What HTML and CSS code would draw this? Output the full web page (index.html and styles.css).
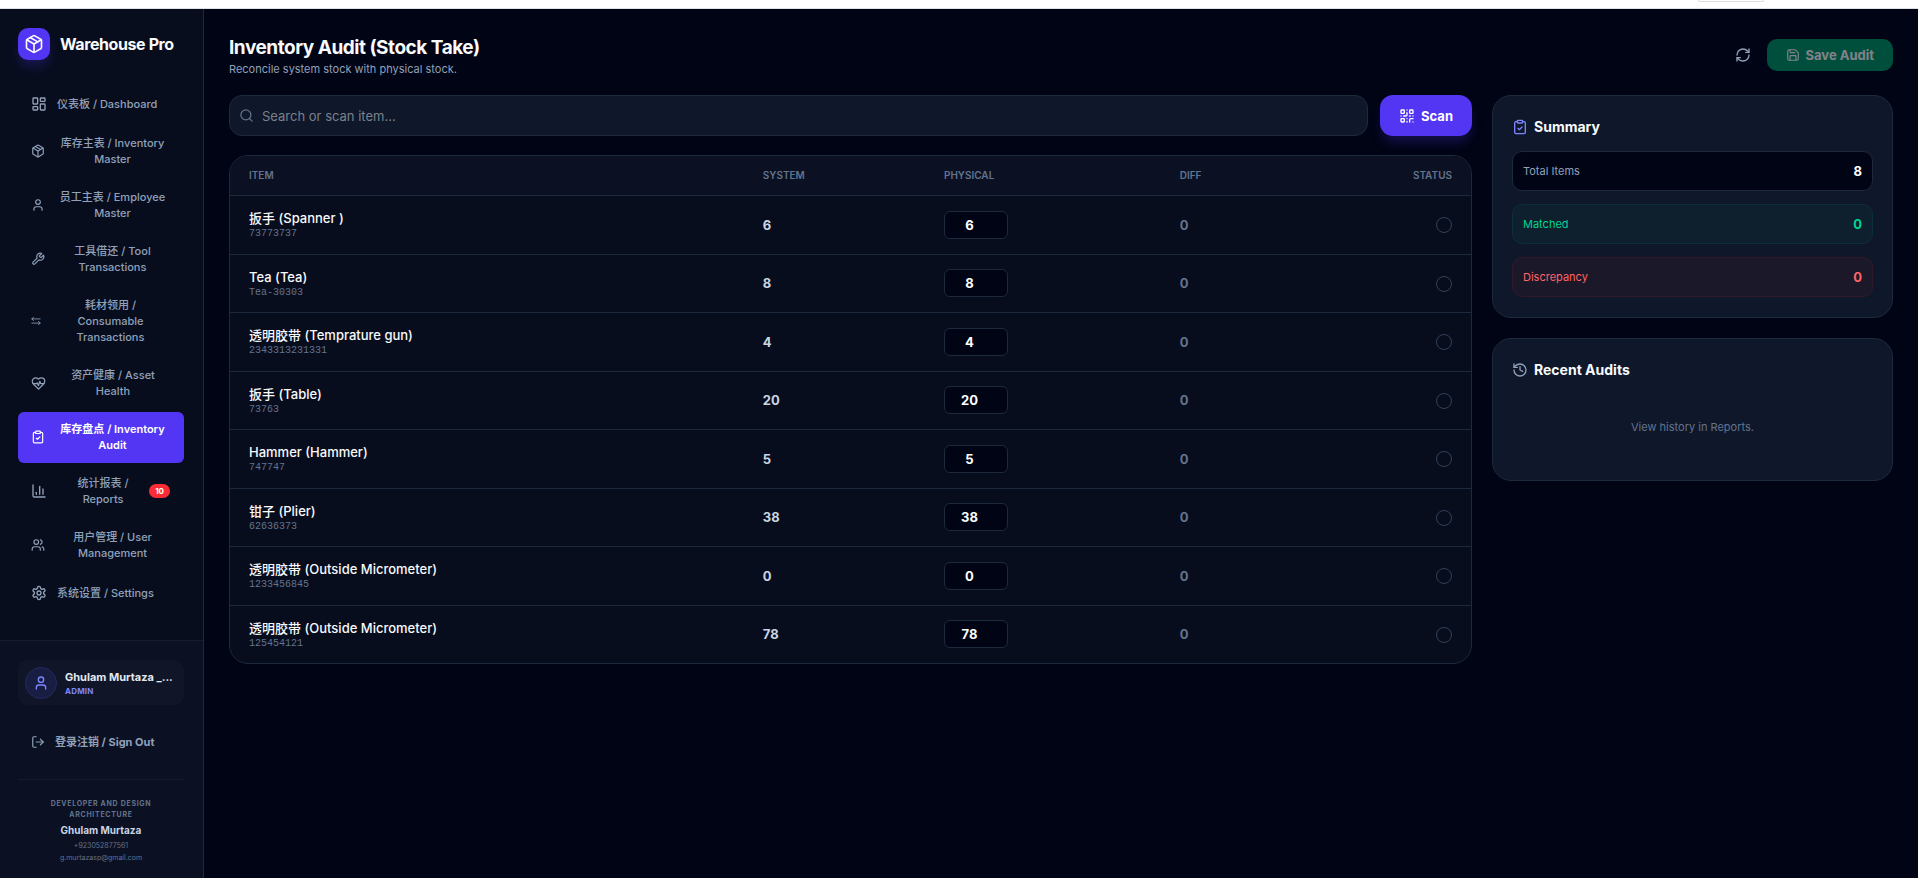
FILE: index.html
```html
<!DOCTYPE html>
<html lang="en">
<head>
  <meta charset="UTF-8">
  <meta name="viewport" content="width=device-width, initial-scale=1.0">
  <title>Warehouse Pro</title>
  <link rel="stylesheet" href="styles.css">
</head>
<body>
  <!-- Icon set -->
  <svg class="sprite" xmlns="http://www.w3.org/2000/svg">
    <symbol id="i-box" viewBox="0 0 24 24"><path d="m7.5 4.27 9 5.15"/><path d="M21 8a2 2 0 0 0-1-1.73l-7-4a2 2 0 0 0-2 0l-7 4A2 2 0 0 0 3 8v8a2 2 0 0 0 1 1.73l7 4a2 2 0 0 0 2 0l7-4A2 2 0 0 0 21 16Z"/><path d="m3.3 7 8.7 5 8.7-5"/><path d="M12 22V12"/></symbol>
    <symbol id="i-dashboard" viewBox="0 0 24 24"><rect width="7" height="9" x="3" y="3" rx="1"/><rect width="7" height="5" x="14" y="3" rx="1"/><rect width="7" height="9" x="14" y="12" rx="1"/><rect width="7" height="5" x="3" y="16" rx="1"/></symbol>
    <symbol id="i-user" viewBox="0 0 24 24"><path d="M19 21v-2a4 4 0 0 0-4-4H9a4 4 0 0 0-4 4v2"/><circle cx="12" cy="7" r="4"/></symbol>
    <symbol id="i-wrench" viewBox="0 0 24 24"><path d="M14.7 6.3a1 1 0 0 0 0 1.4l1.6 1.6a1 1 0 0 0 1.4 0l3.77-3.77a6 6 0 0 1-7.94 7.94l-6.91 6.91a2.12 2.12 0 0 1-3-3l6.91-6.91a6 6 0 0 1 7.94-7.94l-3.76 3.76z"/></symbol>
    <symbol id="i-swap" viewBox="0 0 24 24"><path d="m6 3-4 4 4 4"/><path d="M2 7h20"/><path d="m18 13 4 4-4 4"/><path d="M22 17H2"/></symbol>
    <symbol id="i-heart" viewBox="0 0 24 24"><path d="M19 14c1.49-1.46 3-3.21 3-5.5A5.5 5.5 0 0 0 16.5 3c-1.76 0-3 .5-4.5 2-1.5-1.5-2.74-2-4.5-2A5.5 5.5 0 0 0 2 8.5c0 2.3 1.5 4.05 3 5.5l7 7Z"/><path d="M3.22 12H9.5l.5-1 2 4.5 2-7 1.5 3.5h5.27"/></symbol>
    <symbol id="i-clipboard" viewBox="0 0 24 24"><rect width="8" height="4" x="8" y="2" rx="1" ry="1"/><path d="M16 4h2a2 2 0 0 1 2 2v14a2 2 0 0 1-2 2H6a2 2 0 0 1-2-2V6a2 2 0 0 1 2-2h2"/><path d="m9 14 2 2 4-4"/></symbol>
    <symbol id="i-chart" viewBox="0 0 24 24"><path d="M3 3v16a2 2 0 0 0 2 2h16"/><path d="M18 17V9"/><path d="M13 17V5"/><path d="M8 17v-3"/></symbol>
    <symbol id="i-users" viewBox="0 0 24 24"><path d="M16 21v-2a4 4 0 0 0-4-4H6a4 4 0 0 0-4 4v2"/><circle cx="9" cy="7" r="4"/><path d="M22 21v-2a4 4 0 0 0-3-3.87"/><path d="M16 3.13a4 4 0 0 1 0 7.75"/></symbol>
    <symbol id="i-settings" viewBox="0 0 24 24"><path d="M12.22 2h-.44a2 2 0 0 0-2 2v.18a2 2 0 0 1-1 1.73l-.43.25a2 2 0 0 1-2 0l-.15-.08a2 2 0 0 0-2.73.73l-.22.38a2 2 0 0 0 .73 2.73l.15.1a2 2 0 0 1 1 1.72v.51a2 2 0 0 1-1 1.74l-.15.09a2 2 0 0 0-.73 2.73l.22.38a2 2 0 0 0 2.73.73l.15-.08a2 2 0 0 1 2 0l.43.25a2 2 0 0 1 1 1.73V20a2 2 0 0 0 2 2h.44a2 2 0 0 0 2-2v-.18a2 2 0 0 1 1-1.73l.43-.25a2 2 0 0 1 2 0l.15.08a2 2 0 0 0 2.73-.73l.22-.39a2 2 0 0 0-.73-2.73l-.15-.08a2 2 0 0 1-1-1.74v-.5a2 2 0 0 1 1-1.74l.15-.09a2 2 0 0 0 .73-2.73l-.22-.38a2 2 0 0 0-2.73-.73l-.15.08a2 2 0 0 1-2 0l-.43-.25a2 2 0 0 1-1-1.73V4a2 2 0 0 0-2-2z"/><circle cx="12" cy="12" r="3"/></symbol>
    <symbol id="i-logout" viewBox="0 0 24 24"><path d="m16 17 5-5-5-5"/><path d="M21 12H9"/><path d="M9 21H5a2 2 0 0 1-2-2V5a2 2 0 0 1 2-2h4"/></symbol>
    <symbol id="i-refresh" viewBox="0 0 24 24"><path d="M3 12a9 9 0 0 1 9-9 9.75 9.75 0 0 1 6.74 2.74L21 8"/><path d="M21 3v5h-5"/><path d="M21 12a9 9 0 0 1-9 9 9.75 9.75 0 0 1-6.74-2.74L3 16"/><path d="M8 16H3v5"/></symbol>
    <symbol id="i-save" viewBox="0 0 24 24"><path d="M15.2 3a2 2 0 0 1 1.4.6l3.8 3.8a2 2 0 0 1 .6 1.4V19a2 2 0 0 1-2 2H5a2 2 0 0 1-2-2V5a2 2 0 0 1 2-2z"/><path d="M17 21v-7a1 1 0 0 0-1-1H8a1 1 0 0 0-1 1v7"/><path d="M7 3v4a1 1 0 0 0 1 1h7"/></symbol>
    <symbol id="i-search" viewBox="0 0 24 24"><circle cx="11" cy="11" r="8"/><path d="m21 21-4.3-4.3"/></symbol>
    <symbol id="i-qr" viewBox="0 0 24 24"><rect width="5" height="5" x="3" y="3" rx="1"/><rect width="5" height="5" x="16" y="3" rx="1"/><rect width="5" height="5" x="3" y="16" rx="1"/><path d="M21 16h-3a2 2 0 0 0-2 2v3"/><path d="M21 21v.01"/><path d="M12 7v3a2 2 0 0 1-2 2H7"/><path d="M3 12h.01"/><path d="M12 3h.01"/><path d="M12 16v.01"/><path d="M16 12h1"/><path d="M21 12v.01"/><path d="M12 21v-1"/></symbol>
    <symbol id="i-history" viewBox="0 0 24 24"><path d="M3 12a9 9 0 1 0 9-9 9.75 9.75 0 0 0-6.74 2.74L3 8"/><path d="M3 3v5h5"/><path d="M12 7v5l4 2"/></symbol>
  </svg>

  <div class="top-strip"><div class="top-tab"></div></div>

  <div class="app">
    <aside class="sidebar">
      <div class="brand">
        <span class="brand-logo"><svg class="icon icon-lg"><use href="#i-box"/></svg></span>
        <span class="brand-name">Warehouse Pro</span>
      </div>

      <nav class="nav">
        <button class="nav-item" type="button"><svg class="icon"><use href="#i-dashboard"/></svg><span>仪表板 / Dashboard</span></button>
        <button class="nav-item wrap" type="button"><svg class="icon icon-sm"><use href="#i-box"/></svg><span>库存主表 / Inventory Master</span></button>
        <button class="nav-item wrap" type="button"><svg class="icon icon-sm"><use href="#i-user"/></svg><span>员工主表 / Employee Master</span></button>
        <button class="nav-item wrap" type="button"><svg class="icon icon-sm"><use href="#i-wrench"/></svg><span>工具借还 / Tool Transactions</span></button>
        <button class="nav-item wrap" type="button"><svg class="icon icon-xs"><use href="#i-swap"/></svg><span>耗材领用 / Consumable Transactions</span></button>
        <button class="nav-item wrap" type="button"><svg class="icon icon-md"><use href="#i-heart"/></svg><span>资产健康 / Asset Health</span></button>
        <button class="nav-item wrap active" type="button"><svg class="icon icon-sm"><use href="#i-clipboard"/></svg><span>库存盘点 / Inventory Audit</span></button>
        <button class="nav-item wrap" type="button"><svg class="icon"><use href="#i-chart"/></svg><span>统计报表 / Reports</span><span class="badge">10</span></button>
        <button class="nav-item wrap" type="button"><svg class="icon icon-sm"><use href="#i-users"/></svg><span>用户管理 / User Management</span></button>
        <button class="nav-item" type="button"><svg class="icon"><use href="#i-settings"/></svg><span>系统设置 / Settings</span></button>
      </nav>

      <div class="sidebar-footer">
        <div class="user-card">
          <span class="avatar"><svg class="icon"><use href="#i-user"/></svg></span>
          <div>
            <div class="user-name">Ghulam Murtaza _...</div>
            <div class="user-role">ADMIN</div>
          </div>
        </div>
        <button class="sign-out" type="button"><svg class="icon icon-sm"><use href="#i-logout"/></svg><span>登录注销 / Sign Out</span></button>
        <div class="credits">
          <div class="credits-label">Developer and Design Architecture</div>
          <div class="credits-name">Ghulam Murtaza</div>
          <div class="credits-line">+923052877561</div>
          <div class="credits-line">g.murtazasp@gmail.com</div>
        </div>
      </div>
    </aside>

    <main class="main">
      <header class="page-header">
        <div>
          <h1>Inventory Audit (Stock Take)</h1>
          <p>Reconcile system stock with physical stock.</p>
        </div>
        <div class="actions">
          <button class="btn-refresh" type="button" aria-label="Refresh"><svg class="icon"><use href="#i-refresh"/></svg></button>
          <button class="btn-save" type="button" disabled><svg class="icon icon-sm"><use href="#i-save"/></svg>Save Audit</button>
        </div>
      </header>

      <div class="content">
        <section class="audit">
          <div class="toolbar">
            <label class="search">
              <svg class="icon icon-md"><use href="#i-search"/></svg>
              <input type="text" placeholder="Search or scan item..." aria-label="Search or scan item">
            </label>
            <button class="btn-scan" type="button"><svg class="icon"><use href="#i-qr"/></svg>Scan</button>
          </div>

          <div class="table-card">
            <table>
              <thead>
                <tr>
                  <th class="col-item">ITEM</th>
                  <th class="col-system">SYSTEM</th>
                  <th class="col-physical">PHYSICAL</th>
                  <th>DIFF</th>
                  <th class="col-status">STATUS</th>
                </tr>
              </thead>
              <tbody>
                <tr>
                  <td><div class="item-name">扳手 (Spanner )</div><div class="item-code">73773737</div></td>
                  <td class="system">6</td>
                  <td><input class="count" type="number" value="6" aria-label="Physical count, Spanner"></td>
                  <td class="diff">0</td>
                  <td class="col-status"><span class="status"></span></td>
                </tr>
                <tr>
                  <td><div class="item-name">Tea (Tea)</div><div class="item-code">Tea-30303</div></td>
                  <td class="system">8</td>
                  <td><input class="count" type="number" value="8" aria-label="Physical count, Tea"></td>
                  <td class="diff">0</td>
                  <td class="col-status"><span class="status"></span></td>
                </tr>
                <tr>
                  <td><div class="item-name">透明胶带 (Temprature gun)</div><div class="item-code">2343313231331</div></td>
                  <td class="system">4</td>
                  <td><input class="count" type="number" value="4" aria-label="Physical count, Temprature gun"></td>
                  <td class="diff">0</td>
                  <td class="col-status"><span class="status"></span></td>
                </tr>
                <tr>
                  <td><div class="item-name">扳手 (Table)</div><div class="item-code">73763</div></td>
                  <td class="system">20</td>
                  <td><input class="count" type="number" value="20" aria-label="Physical count, Table"></td>
                  <td class="diff">0</td>
                  <td class="col-status"><span class="status"></span></td>
                </tr>
                <tr>
                  <td><div class="item-name">Hammer (Hammer)</div><div class="item-code">747747</div></td>
                  <td class="system">5</td>
                  <td><input class="count" type="number" value="5" aria-label="Physical count, Hammer"></td>
                  <td class="diff">0</td>
                  <td class="col-status"><span class="status"></span></td>
                </tr>
                <tr>
                  <td><div class="item-name">钳子 (Plier)</div><div class="item-code">62636373</div></td>
                  <td class="system">38</td>
                  <td><input class="count" type="number" value="38" aria-label="Physical count, Plier"></td>
                  <td class="diff">0</td>
                  <td class="col-status"><span class="status"></span></td>
                </tr>
                <tr>
                  <td><div class="item-name">透明胶带 (Outside Micrometer)</div><div class="item-code">1233456845</div></td>
                  <td class="system">0</td>
                  <td><input class="count" type="number" value="0" aria-label="Physical count, Outside Micrometer 1233456845"></td>
                  <td class="diff">0</td>
                  <td class="col-status"><span class="status"></span></td>
                </tr>
                <tr>
                  <td><div class="item-name">透明胶带 (Outside Micrometer)</div><div class="item-code">125454121</div></td>
                  <td class="system">78</td>
                  <td><input class="count" type="number" value="78" aria-label="Physical count, Outside Micrometer 125454121"></td>
                  <td class="diff">0</td>
                  <td class="col-status"><span class="status"></span></td>
                </tr>
              </tbody>
            </table>
          </div>
        </section>

        <aside class="side">
          <section class="card">
            <h2><svg class="icon icon-indigo"><use href="#i-clipboard"/></svg>Summary</h2>
            <div class="stats">
              <div class="stat"><span>Total Items</span><strong>8</strong></div>
              <div class="stat stat-green"><span>Matched</span><strong>0</strong></div>
              <div class="stat stat-red"><span>Discrepancy</span><strong>0</strong></div>
            </div>
          </section>
          <section class="card">
            <h2><svg class="icon icon-muted"><use href="#i-history"/></svg>Recent Audits</h2>
            <p class="empty">View history in Reports.</p>
          </section>
        </aside>
      </div>
    </main>
  </div>
</body>
</html>
```
FILE: styles.css
```css
* {
  margin: 0;
  padding: 0;
  box-sizing: border-box;
}

body {
  min-height: 100vh;
  display: flex;
  flex-direction: column;
  font-family: Inter, "Noto Sans CJK SC", sans-serif;
  font-size: 13px;
  color: #f8fafc;
  background: #010415;
}

button,
input {
  font: inherit;
  color: inherit;
  border: none;
  background: none;
}

button {
  cursor: pointer;
}

/* Icons */
.sprite {
  position: absolute;
  width: 0;
  height: 0;
}

.icon {
  flex: none;
  width: 16px;
  height: 16px;
  fill: none;
  stroke: currentColor;
  stroke-width: 2;
  stroke-linecap: round;
  stroke-linejoin: round;
}

.icon-lg {
  width: 20px;
  height: 20px;
}

.icon-md {
  width: 15px;
  height: 15px;
}

.icon-sm {
  width: 14px;
  height: 14px;
}

.icon-xs {
  width: 10px;
  height: 10px;
}

.icon-indigo {
  color: #7c86ff;
}

.icon-muted {
  color: #90a1b9;
}

/* Strip above the app */
.top-strip {
  height: 9px;
  background: #fff;
  border-bottom: 1px solid #dfe1e5;
}

.top-tab {
  width: 66px;
  height: 2px;
  margin-left: auto;
  margin-right: 154px;
  border: 1px solid #dadce0;
  border-top: none;
  border-radius: 0 0 4px 4px;
}

.app {
  flex: 1;
  display: flex;
}

/* Sidebar */
.sidebar {
  flex: none;
  width: 204px;
  display: flex;
  flex-direction: column;
  background: #080d1e;
  border-right: 1px solid #1d293d;
}

.brand {
  display: flex;
  align-items: center;
  gap: 10px;
  padding: 19px 18px;
}

.brand-logo {
  display: flex;
  align-items: center;
  justify-content: center;
  width: 32px;
  height: 32px;
  border-radius: 10px;
  background: #5236f3;
  box-shadow: 0 8px 12px -2px rgba(79, 57, 246, 0.25);
}

.brand-name {
  font-size: 16px;
  font-weight: 700;
  letter-spacing: -0.025em;
}

.nav {
  flex: 1;
  display: flex;
  flex-direction: column;
  gap: 3px;
  padding: 6px 19px 15px 18px;
}

.nav-item {
  display: flex;
  align-items: center;
  gap: 10px;
  min-height: 38px;
  padding: 9px 14px 10px 13px;
  border-radius: 6px;
  font-size: 11px;
  font-weight: 500;
  line-height: 16px;
  color: #90a1b9;
}

.nav-item.wrap span:not(.badge) {
  flex: 1;
}

.nav-item.active {
  color: #fff;
  font-weight: 600;
  background: #5236f3;
}

.badge {
  margin-left: -10px;
  padding: 0 6px;
  border-radius: 7px;
  font-size: 8px;
  font-weight: 700;
  line-height: 14px;
  color: #fff;
  background: #fb2c36;
}

.sidebar-footer {
  padding: 19px 19px 14px 18px;
  background: #0b1022;
  border-top: 1px solid #141c30;
}

.user-card {
  display: flex;
  align-items: center;
  gap: 8px;
  height: 45px;
  padding: 0 7px;
  border-radius: 10px;
  background: #101628;
}

.avatar {
  flex: none;
  display: flex;
  align-items: center;
  justify-content: center;
  width: 32px;
  height: 32px;
  border: 1px solid #262764;
  border-radius: 50%;
  color: #7c86ff;
  background: #181d42;
}

.user-name {
  white-space: nowrap;
  font-size: 11px;
  font-weight: 700;
  line-height: 16px;
  color: #e2e8f0;
}

.user-role {
  font-size: 8px;
  font-weight: 700;
  line-height: 12px;
  letter-spacing: 0.025em;
  color: #7c86ff;
}

.sign-out {
  display: flex;
  align-items: center;
  gap: 10px;
  width: 100%;
  margin-top: 19px;
  padding: 10px 13px;
  font-size: 11px;
  font-weight: 700;
  line-height: 16px;
  color: #90a1b9;
}

.credits {
  margin-top: 19px;
  padding-top: 18px;
  border-top: 1px solid #141c30;
  text-align: center;
}

.credits-label {
  padding: 0 20px;
  font-size: 7px;
  font-weight: 700;
  line-height: 11px;
  letter-spacing: 0.1em;
  text-transform: uppercase;
  color: #62748e;
}

.credits-name {
  margin: 3px 0;
  font-size: 10px;
  font-weight: 700;
  line-height: 14px;
  color: #cad5e2;
}

.credits-line {
  font-size: 7px;
  line-height: 12px;
  color: #62748e;
}

/* Main area */
.main {
  flex: 1;
  min-width: 0;
  padding: 25px;
}

.page-header {
  display: flex;
  align-items: center;
  justify-content: space-between;
  margin-bottom: 19px;
}

.page-header h1 {
  font-size: 19px;
  font-weight: 700;
  line-height: 28px;
  letter-spacing: -0.025em;
}

.page-header p {
  font-size: 11px;
  line-height: 14px;
  color: #90a1b9;
}

.actions {
  display: flex;
  gap: 6px;
}

.btn-refresh {
  display: flex;
  align-items: center;
  padding: 8px 10px;
  color: #90a1b9;
}

.btn-save,
.btn-scan {
  display: flex;
  align-items: center;
  gap: 6px;
  padding: 0 19px;
  font-weight: 700;
  color: #fff;
}

.btn-save {
  height: 32px;
  border-radius: 10px;
  background: #009966;
  opacity: 0.5;
}

.btn-scan {
  border-radius: 13px;
  background: #5236f3;
  box-shadow: 0 8px 12px -2px rgba(79, 57, 246, 0.25);
}

.content {
  display: grid;
  grid-template-columns: repeat(4, 1fr);
  align-items: start;
  gap: 20px;
}

.audit {
  grid-column: span 3;
}

.toolbar {
  display: flex;
  gap: 12px;
  height: 41px;
  margin-bottom: 19px;
}

.search {
  flex: 1;
  display: flex;
  align-items: center;
  gap: 8px;
  padding: 0 9px;
  border: 1px solid #1d293d;
  border-radius: 13px;
  color: #62748e;
  background: #0f172a;
}

.search input {
  flex: 1;
  outline: none;
  color: #f8fafc;
}

.search input::placeholder {
  color: #7b818c;
}

/* Audit table */
.table-card {
  overflow: hidden;
  border: 1px solid #1d293d;
  border-radius: 19px;
  background: #080d1e;
}

table {
  width: 100%;
  border-collapse: collapse;
  table-layout: fixed;
}

th {
  height: 39px;
  padding: 0 19px;
  font-size: 10px;
  font-weight: 600;
  text-align: left;
  color: #62748e;
  background: #0b1122;
}

td {
  height: 58px;
  padding: 0 19px;
  border-top: 1px solid #1d293d;
}

tr:nth-child(odd) td {
  height: 59px;
}

.col-item {
  width: 41.4%;
}

.col-system {
  width: 14.6%;
}

.col-physical {
  width: 19%;
}

.col-status {
  text-align: right;
}

.item-name {
  font-weight: 500;
  line-height: 18px;
}

.item-code {
  font-family: "Liberation Mono", monospace;
  font-size: 10px;
  line-height: 13px;
  color: #62748e;
}

.system {
  font-weight: 700;
  color: #cad5e2;
}

.count {
  display: block;
  width: 64px;
  height: 28px;
  padding: 0 6px 0 8px;
  border: 1px solid #1d293d;
  border-radius: 6px;
  font-weight: 700;
  text-align: center;
  color: #fff;
  background: #010415;
}

.diff {
  font-weight: 700;
  color: #62748e;
}

.status {
  display: inline-block;
  width: 16px;
  height: 16px;
  border: 1px solid #314158;
  border-radius: 50%;
  vertical-align: middle;
}

/* Side cards */
.side {
  display: grid;
  gap: 20px;
}

.card {
  padding: 19px 19px 20px;
  border: 1px solid #1d293d;
  border-radius: 19px;
  background: #0f172a;
}

.card h2 {
  display: flex;
  align-items: center;
  gap: 6px;
  margin-bottom: 13px;
  font-size: 14px;
  font-weight: 700;
  line-height: 23px;
}

.stats {
  display: grid;
  gap: 13px;
}

.stat {
  display: flex;
  align-items: center;
  justify-content: space-between;
  height: 40px;
  padding: 0 10px;
  border: 1px solid #1d293d;
  border-radius: 10px;
  font-size: 11px;
  color: #90a1b9;
  background: #010415;
}

.stat strong {
  font-size: 13px;
  font-weight: 700;
  color: #fff;
}

.stat-green,
.stat-green strong {
  color: #00d492;
}

.stat-green {
  border-color: #0d2f38;
  background: #0e202e;
}

.stat-red,
.stat-red strong {
  color: #ff6467;
}

.stat-red {
  border-color: #33182a;
  background: #1b1829;
}

.empty {
  padding: 25px 0;
  font-size: 11px;
  line-height: 16px;
  text-align: center;
  color: #62748e;
}
```
